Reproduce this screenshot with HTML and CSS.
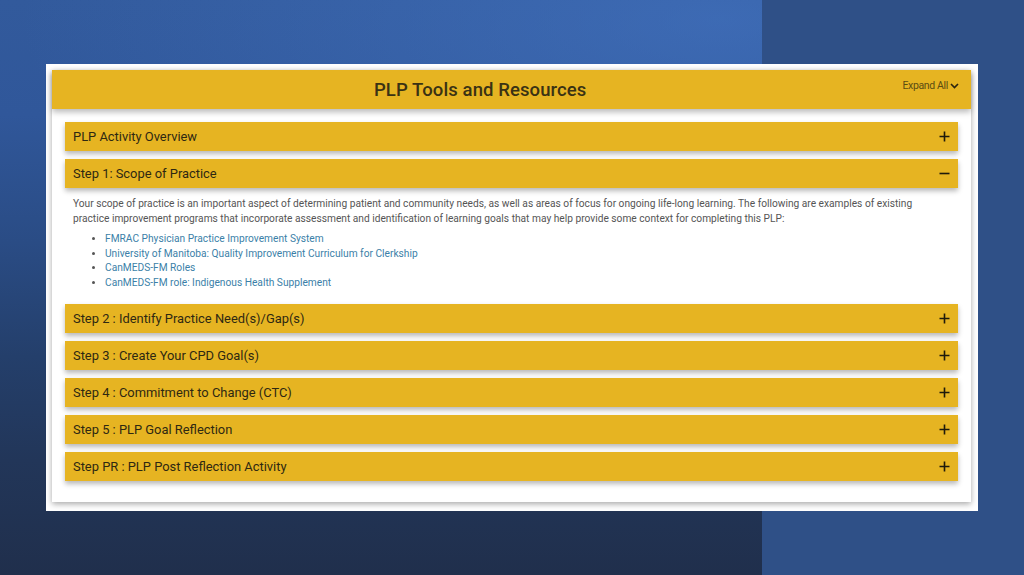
FILE: index.html
```html
<!DOCTYPE html>
<html lang="en">
<head>
<meta charset="utf-8">
<title>PLP Tools and Resources</title>
<link rel="stylesheet" href="styles.css">
</head>
<body>
<div class="frame">
  <div class="panel">
    <div class="panel-head">
      <h1 class="panel-title">PLP Tools and Resources</h1>
      <div class="expand-all">Expand All
        <svg class="chev" width="9" height="6" viewBox="0 0 9 6"><path d="M1 1 L4.5 4.6 L8 1" fill="none" stroke="#2a2410" stroke-width="1.6"/></svg>
      </div>
    </div>
    <div class="panel-body">
      <div class="acc">
        <div class="acc-row"><span>PLP Activity Overview</span>
          <svg class="ico" width="11" height="11" viewBox="0 0 11 11"><path d="M5.5 0.5 V10.5 M0.5 5.5 H10.5" stroke="#1e1a0c" stroke-width="1.6"/></svg></div>
      </div>
      <div class="acc">
        <div class="acc-row"><span>Step 1: Scope of Practice</span>
          <svg class="ico" width="11" height="11" viewBox="0 0 11 11"><path d="M0.5 5.5 H10.5" stroke="#1e1a0c" stroke-width="1.6"/></svg></div>
        <div class="acc-content">
          <p>Your scope of practice is an important aspect of determining patient and community needs, as well as areas of focus for ongoing life-long learning. The following are examples of existing practice improvement programs that incorporate assessment and identification of learning goals that may help provide some context for completing this PLP:</p>
          <ul>
            <li><a href="#">FMRAC Physician Practice Improvement System</a></li>
            <li><a href="#">University of Manitoba: Quality Improvement Curriculum for Clerkship</a></li>
            <li><a href="#">CanMEDS-FM Roles</a></li>
            <li><a href="#">CanMEDS-FM role: Indigenous Health Supplement</a></li>
          </ul>
        </div>
      </div>
      <div class="acc">
        <div class="acc-row"><span>Step 2 : Identify Practice Need(s)/Gap(s)</span>
          <svg class="ico" width="11" height="11" viewBox="0 0 11 11"><path d="M5.5 0.5 V10.5 M0.5 5.5 H10.5" stroke="#1e1a0c" stroke-width="1.6"/></svg></div>
      </div>
      <div class="acc">
        <div class="acc-row"><span>Step 3 : Create Your CPD Goal(s)</span>
          <svg class="ico" width="11" height="11" viewBox="0 0 11 11"><path d="M5.5 0.5 V10.5 M0.5 5.5 H10.5" stroke="#1e1a0c" stroke-width="1.6"/></svg></div>
      </div>
      <div class="acc">
        <div class="acc-row"><span>Step 4 : Commitment to Change (CTC)</span>
          <svg class="ico" width="11" height="11" viewBox="0 0 11 11"><path d="M5.5 0.5 V10.5 M0.5 5.5 H10.5" stroke="#1e1a0c" stroke-width="1.6"/></svg></div>
      </div>
      <div class="acc">
        <div class="acc-row"><span>Step 5 : PLP Goal Reflection</span>
          <svg class="ico" width="11" height="11" viewBox="0 0 11 11"><path d="M5.5 0.5 V10.5 M0.5 5.5 H10.5" stroke="#1e1a0c" stroke-width="1.6"/></svg></div>
      </div>
      <div class="acc">
        <div class="acc-row"><span>Step PR : PLP Post Reflection Activity</span>
          <svg class="ico" width="11" height="11" viewBox="0 0 11 11"><path d="M5.5 0.5 V10.5 M0.5 5.5 H10.5" stroke="#1e1a0c" stroke-width="1.6"/></svg></div>
      </div>
    </div>
  </div>
</div>
</body>
</html>
```
FILE: styles.css
```css
html, body {
  margin: 0;
  padding: 0;
}
body {
  width: 1024px;
  height: 575px;
  overflow: hidden;
  font-family: Roboto, "Liberation Sans", Arial, sans-serif;
  background-color: #2b4a80;
  background-image:
    linear-gradient(to right, rgba(0,0,0,0) 762px, #2f5087 762px),
    radial-gradient(ellipse 700px 260px at 720px 20px, rgba(70,120,200,0.55), rgba(70,120,200,0) 100%),
    linear-gradient(to bottom, #325a9c 0%, #30579a 20%, #2a4c85 42%, #243f6b 62%, #223659 80%, #202f4c 100%);
  display: flex;
  flex-direction: column;
  align-items: flex-start;
}
.frame {
  margin: 64px 0 0 46px;
  width: 932px;
  height: 447px;
  box-sizing: border-box;
  background: #ffffff;
  padding: 6px 7px 9px 6px;
}
.panel {
  width: 919px;
  height: 432px;
  background: #ffffff;
  box-shadow: 0 2px 6px rgba(0,0,0,0.35);
  display: flex;
  flex-direction: column;
}
.panel-head {
  height: 39px;
  background: #e6b422;
  box-shadow: 0 3px 6px rgba(0,0,0,0.28);
  display: flex;
  align-items: center;
  padding: 1px 12px 0 6px;
  box-sizing: border-box;
  position: relative;
  z-index: 1;
}
.panel-title {
  flex: 1;
  margin: 0;
  text-align: center;
  font-size: 18.5px;
  font-weight: 500;
  color: #3a3214;
  letter-spacing: 0.1px;
}
.expand-all {
  align-self: flex-start;
  margin-top: 8px;
  font-size: 10.5px;
  color: #5b4c12;
  letter-spacing: -0.35px;
  display: flex;
  align-items: center;
  gap: 2px;
}
.chev {
  display: block;
  margin-top: 1px;
}
.panel-body {
  padding: 13px 13px 20px 13px;
  display: flex;
  flex-direction: column;
  gap: 8px;
}
.acc-row {
  height: 29px;
  background: #e6b422;
  box-shadow: 0 3px 5px rgba(0,0,0,0.28);
  display: flex;
  align-items: center;
  justify-content: space-between;
  padding: 0 8px 0 8px;
  box-sizing: border-box;
  font-size: 12.9px;
  color: #2e2812;
}
.ico {
  display: block;
}
.acc-content {
  padding: 8px 8px 6px 8px;
  font-size: 10.2px;
  color: #555555;
}
.acc-content p {
  margin: 0;
  line-height: 15px;
}
.acc-content ul {
  margin: 6px 0 0 0;
  padding-left: 32px;
}
.acc-content li {
  line-height: 14.5px;
  color: #555;
}
.acc-content a {
  color: #3b7fa8;
  text-decoration: none;
}
```
